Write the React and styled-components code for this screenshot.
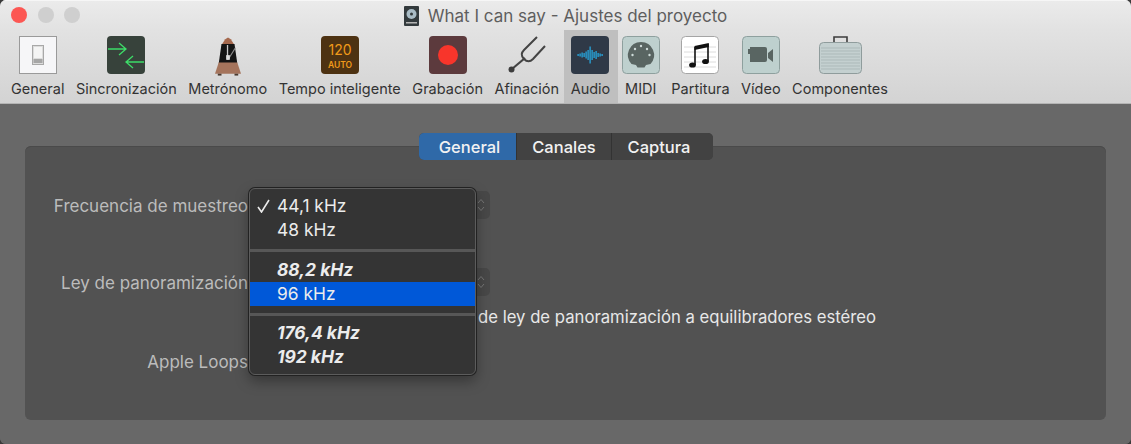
import styled, { createGlobalStyle } from "styled-components";

const GlobalStyle = createGlobalStyle`
    html, body {
        margin: 0;
        padding: 0;
        background: #3a3a3a;
    }
    body {
        font-family: "Inter", "Liberation Sans", sans-serif;
    }
`;

const tools = [
    { label: "General", icon: <SwitchIcon /> },
    { label: "Sincronización", icon: <SyncIcon /> },
    { label: "Metrónomo", icon: <MetronomeIcon /> },
    { label: "Tempo inteligente", icon: <TempoIcon /> },
    { label: "Grabación", icon: <RecordIcon /> },
    { label: "Afinación", icon: <ForkIcon /> },
    { label: "Audio", icon: <WaveIcon />, active: true },
    { label: "MIDI", icon: <MidiIcon /> },
    { label: "Partitura", icon: <ScoreIcon /> },
    { label: "Vídeo", icon: <VideoIcon /> },
    { label: "Componentes", icon: <CaseIcon /> },
];

function SwitchIcon() {
    return (
        <svg width="38" height="38" viewBox="0 0 38 38">
            <rect x="0.5" y="0.5" width="37" height="37" fill="#f6f6f8" stroke="#9a9a9a" />
            <rect x="13.5" y="9.5" width="11" height="19" fill="#dcdcdc" stroke="#a8a8a8" />
            <rect x="15" y="11" width="8" height="11" fill="#f4f4f4" />
            <rect x="14.5" y="23" width="9" height="4" fill="#a6a6a6" />
        </svg>
    );
}

function SyncIcon() {
    return (
        <svg width="38" height="38" viewBox="0 0 38 38">
            <rect width="38" height="38" rx="4" fill="#37423b" />
            <g fill="none" stroke="#3ddc68" strokeWidth="1.3">
                <path d="M1 13h18M12 7l7 6-7 6" />
                <path d="M37 26H19M26 20l-7 6 7 6" />
            </g>
        </svg>
    );
}

function MetronomeIcon() {
    return (
        <svg width="26" height="42" viewBox="0 0 28 42">
            <path d="M11 2l3-2 3 2 4 6H7z" fill="#a5694e" />
            <path d="M7 7h14l3 21H4z" fill="#141414" />
            <path d="M4 27h20l4 12H0z" fill="#a5745c" />
            <rect x="3" y="39" width="4" height="2" fill="#4a3a30" />
            <rect x="21" y="39" width="4" height="2" fill="#4a3a30" />
            <path d="M13.5 8v16" stroke="#c9c9c9" strokeWidth="1.4" />
            <path d="M14 24l8-13" stroke="#8f8f8f" strokeWidth="1.2" />
            <rect x="12" y="19" width="4" height="5" fill="#dddddd" />
        </svg>
    );
}

function TempoIcon() {
    return (
        <svg width="38" height="38" viewBox="0 0 38 38">
            <rect width="38" height="38" rx="4" fill="#4d3212" />
            <text x="19" y="19" textAnchor="middle" fontFamily="Inter, sans-serif" fontSize="14" fill="#f09a1a">120</text>
            <text x="19" y="32" textAnchor="middle" fontFamily="Inter, sans-serif" fontSize="8.5" fontWeight="600" fill="#f09a1a">AUTO</text>
        </svg>
    );
}

function RecordIcon() {
    return (
        <svg width="38" height="38" viewBox="0 0 38 38">
            <rect width="38" height="38" rx="4" fill="#5c3a3d" />
            <circle cx="19" cy="19" r="10" fill="#f8352b" />
        </svg>
    );
}

function ForkIcon() {
    return (
        <svg width="38" height="38" viewBox="0 0 38 38">
            <g fill="none" stroke="#444444" strokeWidth="2">
                <path d="M29 1L16 14c-3 3-3 6 0 9s6 3 9 0L37 10" />
                <path d="M17 22L4 33" strokeWidth="2.2" />
            </g>
            <circle cx="3.5" cy="33.5" r="3" fill="#3c3c3c" />
        </svg>
    );
}

function WaveIcon() {
    const bars = [2, 3, 5, 4, 7, 10, 17, 10, 6, 8, 4, 3, 2];
    return (
        <svg width="38" height="38" viewBox="0 0 38 38">
            <rect width="38" height="38" rx="4" fill="#2f3947" />
            {bars.map((h, i) => (
                <rect key={i} x={6.5 + i * 2} y={19 - h / 2} width="1.2" height={h} fill="#26aeea" />
            ))}
        </svg>
    );
}

function MidiIcon() {
    return (
        <svg width="38" height="38" viewBox="0 0 38 38">
            <rect x="0.5" y="0.5" width="37" height="37" rx="4" fill="#bed0ce" stroke="#8ea09e" />
            <path d="M19 6a13 13 0 0 1 9.5 21.9L24 29l-1.5 2.5h-7L14 29l-4.500-1.100A13 13 0 0 1 19 6z" fill="#596562" />
            {[[19, 10], [13, 13], [25, 13], [10.5, 19], [27.5, 19]].map(([cx, cy]) => (
                <circle key={cx} cx={cx} cy={cy} r="1.2" fill="#cfdcda" />
            ))}
        </svg>
    );
}

function ScoreIcon() {
    return (
        <svg width="38" height="38" viewBox="0 0 38 38">
            <rect x="0.5" y="0.5" width="37" height="37" rx="4" fill="#ffffff" stroke="#a5a5a5" />
            <g stroke="#dcdcdc">
                <path d="M3 11h32M3 16h32M3 21h32M3 26h32M3 31h32" />
            </g>
            <path d="M14 11v18M27 8v17" stroke="#111" strokeWidth="1.6" fill="none" />
            <path d="M13.500 10L27.800 7v4l-14.300 3z" fill="#111" />
            <ellipse cx="11.500" cy="29" rx="3.400" ry="2.600" fill="#111" />
            <ellipse cx="24.500" cy="25.500" rx="3.400" ry="2.600" fill="#111" />
        </svg>
    );
}

function VideoIcon() {
    return (
        <svg width="38" height="38" viewBox="0 0 38 38">
            <rect x="0.5" y="0.5" width="37" height="37" rx="4" fill="#bed0ce" stroke="#8ea09e" />
            <path d="M8 11h15a2 2 0 0 1 2 2v11a2 2 0 0 1-2 2H8z" fill="#596562" />
            <rect x="6" y="13" width="2" height="5" fill="#596562" />
            <path d="M26 17l5-4v13l-5-4z" fill="#596562" />
        </svg>
    );
}

function CaseIcon() {
    return (
        <svg width="43" height="38" viewBox="0 0 43 38">
            <path d="M15 6V1h13v5" fill="none" stroke="#3c3c3c" strokeWidth="1.600" />
            <rect x="0.5" y="6.5" width="42" height="31" rx="4" fill="#c4d0d0" stroke="#8f9c9c" />
            <g stroke="#acb9b9">
                <path d="M2 12h39M2 15h39M2 18h39M2 21h39M2 24h39M2 27h39M2 30h39M2 33h39" />
            </g>
        </svg>
    );
}

const options = [
    { label: "44,1 kHz", checked: true },
    { label: "48 kHz" },
    { divider: true },
    { label: "88,2 kHz", italic: true },
    { label: "96 kHz", selected: true },
    { divider: true, second: true },
    { label: "176,4 kHz", italic: true },
    { label: "192 kHz", italic: true },
];

export default function App() {
    return (
        <>
            <GlobalStyle />
            <Window>
                <TitleBar>
                    <Lights>
                        <Light color="#fc5753" />
                        <Light color="#cfcfcf" />
                        <Light color="#cfcfcf" />
                    </Lights>
                    <Title>
                        <ProjectBadge>
                            <svg width="15" height="20" viewBox="0 0 15 20">
                                <rect width="15" height="20" rx="1" fill="#333a3d" />
                                <circle cx="7.5" cy="8" r="5" fill="#a9bcc6" />
                                <circle cx="7.5" cy="8" r="1.5" fill="#333a3d" />
                                <rect x="2" y="16" width="11" height="1.5" fill="#b5b5b5" />
                            </svg>
                        </ProjectBadge>
                        What I can say - Ajustes del proyecto
                    </Title>
                </TitleBar>
                <Toolbar>
                    {tools.map((tool) => (
                        <Tool key={tool.label} $active={tool.active}>
                            <ToolIcon>{tool.icon}</ToolIcon>
                            <ToolLabel>{tool.label}</ToolLabel>
                        </Tool>
                    ))}
                </Toolbar>
                <Content>
                    <Tabs>
                        <Tab $active $width={98} $shift={4}>General</Tab>
                        <Tab $width={95} $shift={0}>Canales</Tab>
                        <Tab $width={101} $shift={-7}>Captura</Tab>
                    </Tabs>
                    <Panel>
                        <SettingRow $height={77}>
                            <SettingLabel>Frecuencia de muestreo</SettingLabel>
                            <SelectStub><Chevrons /></SelectStub>
                        </SettingRow>
                        <SettingRow $height={79}>
                            <SettingLabel>Ley de panoramización</SettingLabel>
                            <SelectStub><Chevrons /></SelectStub>
                            <CheckText>de ley de panoramización a equilibradores estéreo</CheckText>
                        </SettingRow>
                        <SettingRow $height={30}>
                            <SettingLabel>Apple Loops</SettingLabel>
                        </SettingRow>
                        <Menu>
                            {options.map((option, i) =>
                                option.divider ? (
                                    <MenuDivider key={i} $second={option.second} />
                                ) : (
                                    <MenuItem key={option.label} $italic={option.italic} $selected={option.selected}>
                                        {option.checked && (
                                            <Check>
                                                <svg width="13" height="14" viewBox="0 0 13 14">
                                                    <path d="M1 8l3.500 5L12 1" fill="none" stroke="#ececec" strokeWidth="1.600" />
                                                </svg>
                                            </Check>
                                        )}
                                        {option.label}
                                    </MenuItem>
                                )
                            )}
                        </Menu>
                    </Panel>
                </Content>
            </Window>
        </>
    );
}

function Chevrons() {
    return (
        <svg width="8" height="14" viewBox="0 0 8 14">
            <path d="M1 5l3-3.5L7 5M1 9l3 3.5L7 9" fill="none" stroke="#767676" strokeWidth="1" />
        </svg>
    );
}

const Window = styled.div`
    width: 1131px;
    height: 444px;
    overflow: hidden;
    display: flex;
    flex-direction: column;
    border-radius: 6px;
    background: #686868;
`;

const TitleBar = styled.div`
    height: 30px;
    flex-shrink: 0;
    position: relative;
    display: flex;
    align-items: center;
    justify-content: center;
    background: linear-gradient(#ebebeb, #e2e2e2);
    box-shadow: inset 0 1px 0 #f6f6f6;
`;

const Lights = styled.div`
    position: absolute;
    left: 11px;
    top: 7px;
    display: flex;
    gap: 10.5px;
`;

const Light = styled.span`
    width: 16px;
    height: 16px;
    border-radius: 50%;
    background: ${(props) => props.color};
`;

const Title = styled.div`
    display: flex;
    align-items: center;
    gap: 9px;
    padding-top: 2px;
    font-size: 17px;
    color: #5e5e5e;
`;

const ProjectBadge = styled.span`
    display: flex;
`;

const Toolbar = styled.div`
    height: 74px;
    flex-shrink: 0;
    display: flex;
    gap: 11.5px;
    padding-left: 11px;
    box-sizing: border-box;
    background: linear-gradient(#e2e2e2, #d3d3d3);
    border-bottom: 1px solid #b4b4b4;
`;

const Tool = styled.div`
    position: relative;
    min-width: 38px;
    display: flex;
    flex-direction: column;
    align-items: center;
    &::before {
        content: "";
        display: ${(props) => (props.$active ? "block" : "none")};
        position: absolute;
        top: 0;
        bottom: 0;
        left: -7px;
        right: -8px;
        background: #bfbfbf;
    }
`;

const ToolIcon = styled.div`
    position: relative;
    height: 42px;
    padding-top: 6px;
    display: flex;
    align-items: flex-start;
    justify-content: center;
`;

const ToolLabel = styled.div`
    position: relative;
    margin-top: 2px;
    font-size: 14.5px;
    line-height: 18px;
    color: #333333;
    white-space: nowrap;
`;

const Content = styled.div`
    flex: 1;
    display: flex;
    flex-direction: column;
    padding: 29px 25px 24px;
    background: #686868;
`;

const Tabs = styled.div`
    position: relative;
    z-index: 1;
    align-self: center;
    display: flex;
    height: 27px;
    margin-bottom: -14px;
    margin-left: 1px;
    border-radius: 5px;
    overflow: hidden;
    background: #424242;
`;

const Tab = styled.div`
    width: ${(props) => props.$width}px;
    display: flex;
    align-items: center;
    justify-content: center;
    box-sizing: border-box;
    padding-left: ${(props) => Math.max(props.$shift, 0)}px;
    padding-right: ${(props) => Math.max(-props.$shift, 0)}px;
    border-right: 1px solid #333333;
    font-size: 16.5px;
    font-weight: 500;
    color: #f2f2f2;
    background: ${(props) => (props.$active ? "#2f69a8" : "#424242")};
    &:last-child {
        border-right: none;
    }
`;

const Panel = styled.div`
    position: relative;
    flex: 1;
    padding-top: 45px;
    box-sizing: border-box;
    border-radius: 6px;
    background: #525252;
    box-shadow: inset 0 1px 0 #4a4a4a;
`;

const SettingRow = styled.div`
    height: ${(props) => props.$height}px;
    position: relative;
    display: flex;
    align-items: flex-start;
`;

const SettingLabel = styled.div`
    width: 223px;
    height: 28px;
    padding-top: 1px;
    box-sizing: border-box;
    text-align: right;
    font-size: 17px;
    line-height: 28px;
    color: #bcbcbc;
    white-space: nowrap;
`;

const SelectStub = styled.div`
    width: 232px;
    height: 28px;
    margin-left: 10px;
    display: flex;
    align-items: center;
    justify-content: flex-end;
    padding-right: 5px;
    box-sizing: border-box;
    border-radius: 5px;
    background: #484848;
`;

const CheckText = styled.div`
    position: absolute;
    left: 453px;
    top: 39px;
    font-size: 16.7px;
    line-height: 20px;
    color: #e8e8e8;
    white-space: nowrap;
`;

const Menu = styled.div`
    position: absolute;
    left: 224px;
    top: 42px;
    width: 227px;
    height: 187px;
    box-sizing: border-box;
    padding-top: 5px;
    border-radius: 6px;
    background: #343434;
    border: 1px solid #5c5c5c;
    box-shadow: 0 0 0 1px #222222, 0 6px 14px rgba(0, 0, 0, 0.35);
`;

const MenuItem = styled.div`
    position: relative;
    height: 24px;
    box-sizing: border-box;
    padding: 0 0 2px 27px;
    display: flex;
    align-items: center;
    font-size: 17.4px;
    font-weight: ${(props) => (props.$italic ? 700 : 400)};
    font-style: ${(props) => (props.$italic ? "italic" : "normal")};
    color: #ececec;
    background: ${(props) => (props.$selected ? "#0058d8" : "transparent")};
`;

const Check = styled.span`
    position: absolute;
    left: 7px;
    top: 5px;
    display: flex;
`;

const MenuDivider = styled.div`
    height: 3px;
    margin: ${(props) => (props.$second ? "7px 0 5.5px" : "7px 0 6px")};
    background: #575757;
`;
